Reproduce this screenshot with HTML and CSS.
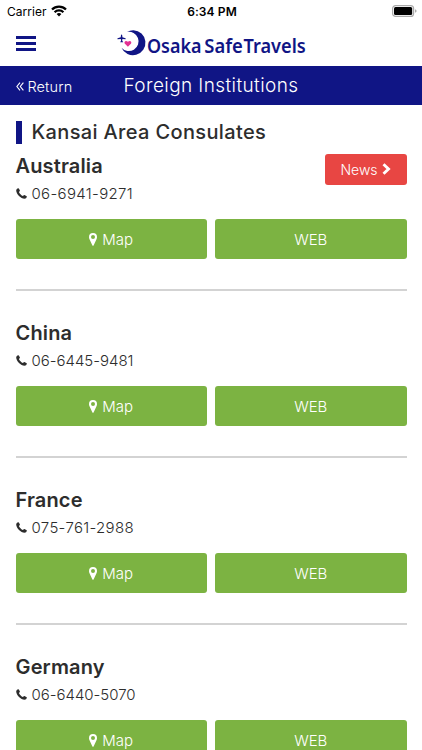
FILE: index.html
```html
<!DOCTYPE html>
<html lang="en">
<head>
<meta charset="utf-8">
<title>Osaka Safe Travels</title>
<link rel="stylesheet" href="styles.css">
</head>
<body>
<svg class="defs" width="0" height="0">
  <symbol id="phone" viewBox="0 0 11 11"><path d="M.2 2.500C.2 1.200 1.200.4 2.200.2c.5-.1.6.2.8.6l.9 1.800c.3.600-.9 1.100-.9 1.600 0 .6 2.900 3.600 3.800 3.700.5 0 1-1.200 1.600-.9l1.900 1c.4.200.6.3.5.8-.2 1-1 2-2.400 2C5 10.800.2 6 .2 2.500z"/></symbol>
  <symbol id="pin" viewBox="0 0 8 13"><path fill-rule="evenodd" d="M4 0a4 4 0 0 1 4 4c0 .8-.1 1.300-.4 1.900L4.700 12.300c-.3.700-1.100.7-1.400 0L.4 5.900C.1 5.300 0 4.800 0 4a4 4 0 0 1 4-4zm0 2.100a2 2 0 1 0 0 4 2 2 0 0 0 0-4z"/></symbol>
</svg>
<div class="status">
  <div class="carrier">Carrier
    <svg width="16" height="12" viewBox="0 0 16 12"><g fill="none" stroke="#000" stroke-width="2.300"><path d="M1 4.500a10 10 0 0 1 14 0"/><path d="M3.600 7.300a6.200 6.200 0 0 1 8.800 0"/></g><path d="M5.600 9.100a3.400 3.400 0 0 1 4.800 0L8 11.600z"/></svg>
  </div>
  <time>6:34 PM</time>
  <svg class="battery" width="25" height="12" viewBox="0 0 25 12"><rect x=".6" y=".6" width="21" height="10.800" rx="3" fill="#fff" stroke="#aaa" stroke-width="1.200"/><rect x="2" y="2" width="18.200" height="8" rx="1.500"/><path d="M23.200 4.300q1.300.5 1.300 1.700t-1.300 1.700z" fill="#999"/></svg>
</div>
<header class="header">
  <div class="menu"><i></i><i></i><i></i></div>
  <svg class="logo" width="190" height="32" viewBox="0 0 190 32">
    <path fill="#101585" fill-rule="evenodd" d="M16.500.2a12.500 12.500 0 1 1-12 17.500 9.700 9.700 0 1 0 5.500-15.800A12 12 0 0 1 16.500.2z"/>
    <path fill="#101585" d="M4.600 4.500c.7 0 .8 1.700.8 2.800l3.200 1v.9l-3.200-.2-.2 2 .9.700v.5H3.300v-.5l.8-.7-.3-2-3.300.2v-.9l3.300-1c0-1.100.1-2.800.8-2.800z"/>
    <path fill="#e33193" d="M10.900 16.800 7.900 13.700c-1.400-1.600.7-4.200 3-1.900 2.300-2.300 4.400.3 3 1.900z"/>
    <g class="logo-text">
      <text x="30" y="23.300" textLength="54.500" lengthAdjust="spacingAndGlyphs">Osaka</text>
      <text x="87.300" y="23.300" textLength="38.500" lengthAdjust="spacingAndGlyphs">Safe</text>
      <text x="126.500" y="23.300" textLength="62.300" lengthAdjust="spacingAndGlyphs">Travels</text>
    </g>
  </svg>
</header>
<nav class="bar">
  <a class="return"><svg width="8" height="9" viewBox="0 0 8 9"><path d="M4 .7.900 4.500 4 8.300M7.400.7 4.300 4.500l3.100 3.800" fill="none" stroke="#fff" stroke-width="1.100"/></svg><span>Return</span></a>
  <h1>Foreign Institutions</h1>
</nav>
<main>
  <h2>Kansai Area Consulates</h2>
  <section>
    <a class="news">News<svg width="9" height="12" viewBox="0 0 9 12"><path d="m1.500 1.300 5 4.700-5 4.700" fill="none" stroke="#fff" stroke-width="2.900"/></svg></a>
    <h3>Australia</h3>
    <p class="tel wide"><svg><use href="#phone"/></svg>06-6941-9271</p>
    <div class="buttons"><a><svg><use href="#pin"/></svg>Map</a><a>WEB</a></div>
  </section>
  <section>
    <h3>China</h3>
    <p class="tel"><svg><use href="#phone"/></svg>06-6445-9481</p>
    <div class="buttons"><a><svg><use href="#pin"/></svg>Map</a><a>WEB</a></div>
  </section>
  <section>
    <h3>France</h3>
    <p class="tel wide"><svg><use href="#phone"/></svg>075-761-2988</p>
    <div class="buttons"><a><svg><use href="#pin"/></svg>Map</a><a>WEB</a></div>
  </section>
  <section>
    <h3>Germany</h3>
    <p class="tel"><svg><use href="#phone"/></svg>06-6440-5070</p>
    <div class="buttons"><a><svg><use href="#pin"/></svg>Map</a><a>WEB</a></div>
  </section>
</main>
</body>
</html>
```
FILE: styles.css
```css
* { box-sizing: border-box; margin: 0; padding: 0; }
html { overflow: hidden; }
body { height: 750px; overflow: hidden; background: #fff; color: #2d2d2d; font-family: Inter, "Liberation Sans", sans-serif; font-weight: 300; }
.defs { position: absolute; }
.status { height: 22px; display: grid; grid-template-columns: 1fr auto 1fr; align-items: center; padding: 0 5px 0 7px; color: #000; font-size: 12px; font-weight: 400; }
.carrier { display: flex; align-items: center; gap: 4px; letter-spacing: .05px; }
.status time { font-weight: 600; letter-spacing: .1px; }
.battery { justify-self: end; margin-top: -1px; }
.header { height: 43.500px; display: flex; align-items: flex-start; padding: 7px 15.500px 0; }
.menu { display: grid; gap: 3px; width: 20.500px; margin-top: 7px; }
.menu i { height: 3px; background: #101585; }
.logo { margin: 1px 0 0 81px; overflow: visible; }
.logo-text { fill: #101585; font: 600 19.500px "Noto Sans", sans-serif; }
.bar { height: 39.500px; background: #101585; color: #fff; display: grid; grid-template-columns: 1fr auto 1fr; align-items: center; padding: 0 15.500px; }
.return { display: flex; align-items: center; gap: 4px; font-size: 14.500px; letter-spacing: .1px; padding-top: 3px; }
h1 { font-size: 19px; font-weight: 300; letter-spacing: .4px; }
main { padding: 15.500px 15.500px 0; }
h2 { border-left: 6px solid #101585; padding-left: 10px; height: 23.500px; line-height: 23.500px; font-size: 20px; font-weight: 500; letter-spacing: .35px; }
section { height: 167px; padding-top: 31px; border-bottom: 2px solid #d3d3d3; position: relative; }
section:first-of-type { height: 146.500px; padding-top: 10.500px; }
section:last-of-type { height: 136px; border-bottom: 0; }
h3 { height: 22px; line-height: 22px; font-size: 20px; font-weight: 600; letter-spacing: .15px; }
.tel { display: flex; align-items: center; gap: 5px; height: 20px; margin-top: 7px; font-size: 15px; letter-spacing: -.02px; }
.tel.wide { letter-spacing: .33px; }
.tel svg { width: 11px; height: 11px; fill: #2d2d2d; }
.buttons { display: grid; grid-template-columns: 1fr 1fr; gap: 8px; margin-top: 15px; }
.buttons a { height: 40px; border-radius: 3px; background: #7cb342; color: #fff; display: flex; align-items: center; justify-content: center; gap: 5px; padding-top: 1px; font-size: 15px; }
.buttons svg { width: 8px; height: 13px; fill: #fff; }
.news { position: absolute; right: 0; top: 9.500px; width: 82px; height: 31px; border-radius: 3px; background: #e84643; color: #fff; display: flex; align-items: center; justify-content: center; gap: 4px; font-size: 14px; }
```
